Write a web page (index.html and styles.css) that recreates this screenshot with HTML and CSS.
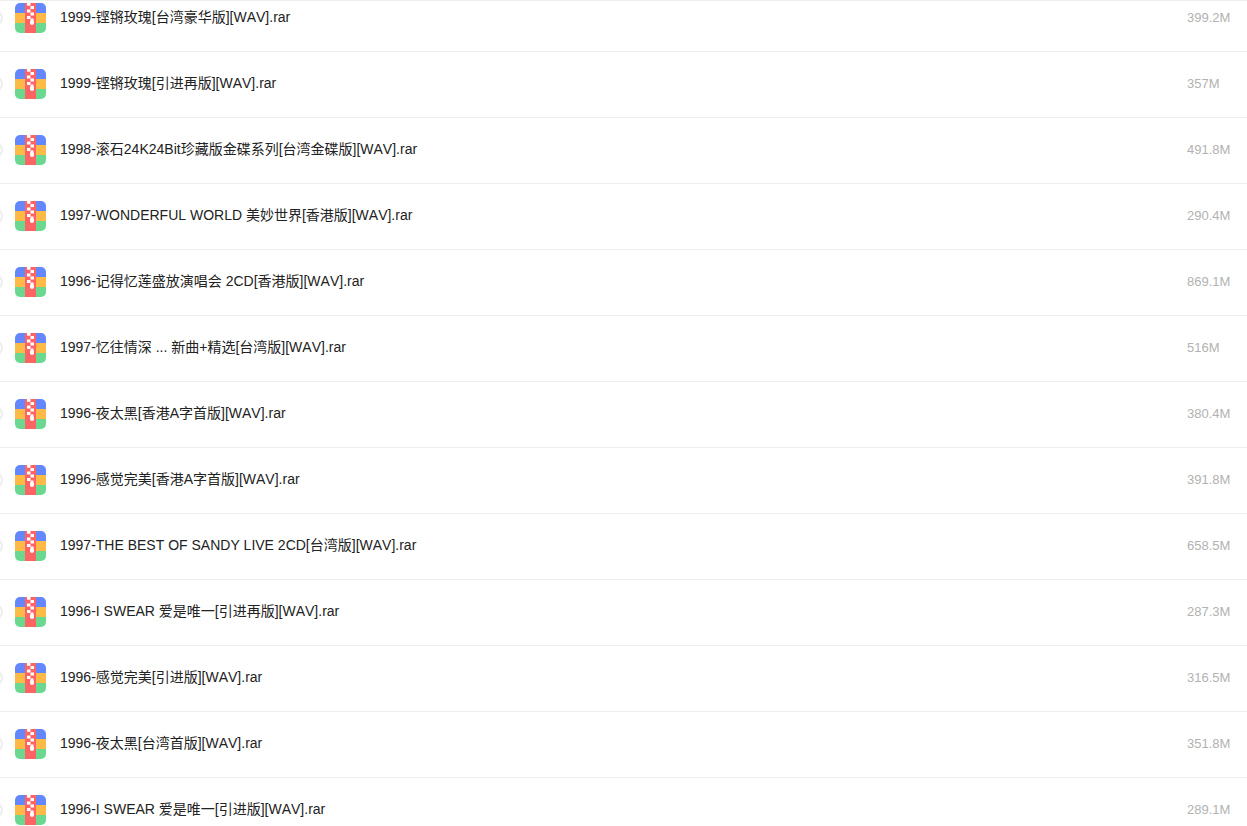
FILE: index.html
```html
<!DOCTYPE html>
<html lang="zh-CN">
<head>
    <meta charset="UTF-8">
    <meta name="viewport" content="width=device-width, initial-scale=1.0">
    <title>文件列表</title>
    <link rel="stylesheet" href="styles.css">
</head>
<body>
    <!-- Archive icon shared by all rows -->
    <svg class="sprite" aria-hidden="true">
        <symbol id="rar" viewBox="0 0 31 30">
            <rect width="31" height="10" fill="#6487ff"/>
            <rect y="10" width="31" height="10" fill="#ffb946"/>
            <rect y="20" width="31" height="10" fill="#6cd78f"/>
            <rect x="10" width="11" height="30" fill="#ff6464"/>
            <path fill="#fff" d="M12 0h3.500v2.700H12zM15.500 3H19v3h-3.500zM12 6.400h3.500v3H12zM15.500 9.500H19v3h-3.500zM12 13h3.500v3H12z"/>
            <path fill="#fff" d="M15.500 15.500H18.500V17.500L19 18V20a2 2 0 0 1-4 0V18l.5-.5z"/>
        </symbol>
    </svg>

    <main class="file-panel">
        <ul class="file-list" id="fileList">
            <!-- Rows are added here -->
        </ul>
    </main>

    <script>
        const files = [
            { name: "1999-铿锵玫瑰[台湾豪华版][WAV].rar", size: "399.2M" },
            { name: "1999-铿锵玫瑰[引进再版][WAV].rar", size: "357M" },
            { name: "1998-滚石24K24Bit珍藏版金碟系列[台湾金碟版][WAV].rar", size: "491.8M" },
            { name: "1997-WONDERFUL WORLD 美妙世界[香港版][WAV].rar", size: "290.4M" },
            { name: "1996-记得忆莲盛放演唱会 2CD[香港版][WAV].rar", size: "869.1M" },
            { name: "1997-忆往情深 ... 新曲+精选[台湾版][WAV].rar", size: "516M" },
            { name: "1996-夜太黑[香港A字首版][WAV].rar", size: "380.4M" },
            { name: "1996-感觉完美[香港A字首版][WAV].rar", size: "391.8M" },
            { name: "1997-THE BEST OF SANDY LIVE 2CD[台湾版][WAV].rar", size: "658.5M" },
            { name: "1996-I SWEAR 爱是唯一[引进再版][WAV].rar", size: "287.3M" },
            { name: "1996-感觉完美[引进版][WAV].rar", size: "316.5M" },
            { name: "1996-夜太黑[台湾首版][WAV].rar", size: "351.8M" },
            { name: "1996-I SWEAR 爱是唯一[引进版][WAV].rar", size: "289.1M" }
        ];

        const fileList = document.getElementById("fileList");

        files.forEach((file, index) => {
            const row = document.createElement("li");
            row.className = "file-row";
            row.innerHTML = `
                <input class="file-check" type="checkbox" id="file${index}" aria-labelledby="name${index}">
                <svg class="file-icon" aria-hidden="true"><use href="#rar"/></svg>
                <a class="file-name" id="name${index}" href="#file${index}">${file.name}</a>
                <span class="file-size">${file.size}</span>`;
            fileList.appendChild(row);
        });
    </script>
</body>
</html>
```
FILE: styles.css
```css
* {
    box-sizing: border-box;
}
body {
    font-family: "Liberation Sans", Arial, "Noto Sans CJK SC", sans-serif;
    font-size: 14px;
    font-kerning: none;
    background-color: #fff;
    color: #222;
    margin: 0;
}
.sprite {
    display: none;
}
.file-panel {
    height: 100vh;
    border-top: 1px solid #eee;
    overflow: hidden;
}
/* The list is scrolled a little under the top line */
.file-list {
    list-style: none;
    margin: -15px 0 0;
    padding: 0;
}
.file-row {
    display: flex;
    align-items: center;
    height: 66px;
    padding-bottom: 1px;
    border-bottom: 1px solid #eee;
}
.file-check {
    appearance: none;
    flex: none;
    width: 16px;
    height: 16px;
    margin: 0 12px 0 -13px;
    border: 2px solid #eee;
    border-radius: 50%;
    cursor: pointer;
}
.file-check:checked {
    background-color: #6487ff;
}
.file-icon {
    flex: none;
    width: 31px;
    height: 30px;
    margin-right: 14px;
    border-radius: 5px;
}
.file-name {
    flex: 1;
    padding-bottom: 2px;
    line-height: 20px;
    color: #222;
    text-decoration: none;
}
.file-name:hover {
    color: #6487ff;
}
.file-size {
    width: 60px;
    line-height: 20px;
    font-size: 13px;
    color: #b2b2b2;
}
```
